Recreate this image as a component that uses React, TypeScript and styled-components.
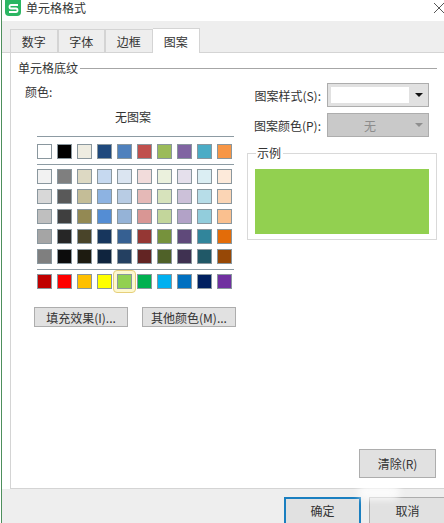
import styled, { createGlobalStyle } from 'styled-components'

const GlobalStyle = createGlobalStyle`
  html, body {
    margin: 0;
    padding: 0;
    background: #fff;
  }
  * {
    box-sizing: border-box;
  }
`

const tabs = ['数字', '字体', '边框', '图案']

const themeRow = ['#ffffff', '#000000', '#eeece1', '#1f497d', '#4f81bd', '#c0504d', '#9bbb59', '#8064a2', '#4bacc6', '#f79646']

const shadeRows = [
  ['#f2f2f2', '#7f7f7f', '#ddd9c3', '#c6d9f0', '#dbe5f1', '#f2dcdb', '#ebf1dd', '#e5e0ec', '#dbeef3', '#fdeada'],
  ['#d8d8d8', '#595959', '#c4bd97', '#8db3e2', '#b8cce4', '#e5b9b7', '#d7e3bc', '#ccc1d9', '#b7dde8', '#fbd5b5'],
  ['#bfbfbf', '#3f3f3f', '#938953', '#548dd4', '#95b3d7', '#d99694', '#c3d69b', '#b2a2c7', '#92cddc', '#fac08f'],
  ['#a5a5a5', '#262626', '#494429', '#17365d', '#366092', '#953734', '#76923c', '#5f497a', '#31859b', '#e36c09'],
  ['#7f7f7f', '#0c0c0c', '#1d1b10', '#0f243e', '#244061', '#632423', '#4f6128', '#3f3151', '#205867', '#974806'],
]

const standardRow = ['#c00000', '#ff0000', '#ffc000', '#ffff00', '#92d050', '#00b050', '#00b0f0', '#0070c0', '#002060', '#7030a0']

function App() {
  return (
    <Page>
      <GlobalStyle />
      <WindowEdge />
      <Dialog>
        <TitleBar>
          <AppIcon>
            <svg width="11" height="9" viewBox="0 0 11 9" fill="none" stroke="#fff" strokeWidth="1.8">
              <path d="M10 1H3C1 1 1 4.5 3 4.5H8C10 4.5 10 8 8 8H1" />
            </svg>
          </AppIcon>
          <TitleText>单元格格式</TitleText>
          <CloseIcon width="10" height="10" viewBox="0 0 10 10" stroke="#444" strokeWidth="0.9">
            <path d="M0 0L10 10M10 0L0 10" />
          </CloseIcon>
        </TitleBar>

        <TabStrip>
          {tabs.map((tab) => (
            <Tab key={tab} $active={tab === '图案'}>{tab}</Tab>
          ))}
        </TabStrip>

        <Panel>
          <SectionHeader>
            <span>单元格底纹</span>
            <SectionLine />
          </SectionHeader>

          <Columns>
            <LeftColumn>
              <ColorLabel>颜色:</ColorLabel>
              <Palette>
                <NoPattern>无图案</NoPattern>
                <Divider $top={11} />
                <SwatchRow $top={7}>
                  {themeRow.map((c) => <Swatch key={c} $color={c} />)}
                </SwatchRow>
                <Divider $top={5} />
                {shadeRows.map((row, i) => (
                  <SwatchRow key={i} $top={i === 0 ? 4 : 5}>
                    {row.map((c) => <Swatch key={c} $color={c} />)}
                  </SwatchRow>
                ))}
                <Divider $top={5} />
                <SwatchRow $top={4}>
                  {standardRow.map((c) => (
                    <SwatchCell key={c}>
                      <Swatch $color={c} />
                      {c === '#92d050' && <SwatchHighlight />}
                    </SwatchCell>
                  ))}
                </SwatchRow>
              </Palette>
              <PaletteButtons>
                <PaletteButton>填充效果(I)...</PaletteButton>
                <PaletteButton>其他颜色(M)...</PaletteButton>
              </PaletteButtons>
            </LeftColumn>

            <RightColumn>
              <FieldRow>
                <FieldLabel>图案样式(S):</FieldLabel>
                <Select>
                  <SelectValue />
                  <Arrow />
                </Select>
              </FieldRow>
              <FieldRow>
                <FieldLabel>图案颜色(P):</FieldLabel>
                <Select $disabled>
                  <SelectValue $disabled>无</SelectValue>
                  <Arrow $disabled />
                </Select>
              </FieldRow>
              <SampleGroup>
                <SampleLegend>示例</SampleLegend>
                <SampleFill />
              </SampleGroup>
              <ClearButton>清除(R)</ClearButton>
            </RightColumn>
          </Columns>
        </Panel>

        <Footer>
          <OkButton>确定</OkButton>
          <CancelButton>取消</CancelButton>
        </Footer>
      </Dialog>
      <Watermark />
    </Page>
  )
}

export default App

const Page = styled.div`
  position: relative;
  display: flex;
  width: 444px;
  height: 523px;
  overflow: hidden;
  background: #fff;
  color: #333;
  font-family: "Noto Sans CJK SC", "Noto Sans", sans-serif;
  font-size: 12px;
`

const WindowEdge = styled.div`
  flex: none;
  width: 2px;
  border-left: 1px solid #fff;
  background: #4d8f5c;
`

const Dialog = styled.div`
  flex: 1;
  display: flex;
  flex-direction: column;
  min-width: 0;
`

const TitleBar = styled.div`
  flex: none;
  display: flex;
  align-items: flex-start;
  height: 21px;
  padding-left: 3px;
  background: #fff;
`

const AppIcon = styled.div`
  flex: none;
  display: flex;
  align-items: center;
  justify-content: center;
  width: 16px;
  height: 16px;
  border-radius: 0 0 4px 4px;
  background: #2bb662;
`

const TitleText = styled.div`
  margin-left: 5px;
  font-size: 12px;
  line-height: 16px;
`

const CloseIcon = styled.svg`
  flex: none;
  margin: 3px 0 0 auto;
  fill: none;
`

const TabStrip = styled.div`
  flex: none;
  display: flex;
  align-items: flex-end;
  height: 32px;
  padding-left: 8px;
  background: #eeeeee;
  border-bottom: 1px solid #d4d4d4;
`

const Tab = styled.div<{ $active?: boolean }>`
  display: flex;
  align-items: center;
  justify-content: center;
  width: 47.5px;
  height: ${(p) => (p.$active ? '25px' : '23px')};
  margin-bottom: ${(p) => (p.$active ? '-1px' : '0')};
  border: 1px solid #d4d4d4;
  border-bottom: none;
  border-left: ${(p) => (p.$active ? 'none' : '1px solid #d4d4d4')};
  background: ${(p) => (p.$active ? '#fff' : '#eeeeee')};
  font-size: 12px;
  z-index: ${(p) => (p.$active ? 1 : 0)};
`

const Panel = styled.div`
  flex: none;
  display: flex;
  flex-direction: column;
  height: 436px;
  margin-left: 8px;
  border-left: 1px solid #d4d4d4;
  border-bottom: 1px solid #d4d4d4;
  padding: 7px 7px 0 7px;
  background: #fff;
`

const SectionHeader = styled.div`
  flex: none;
  display: flex;
  align-items: center;
  height: 16px;
  line-height: 16px;
  font-size: 12px;
`

const SectionLine = styled.div`
  flex: 1;
  height: 1px;
  margin-left: 2px;
  background: #a6a6a6;
`

const Columns = styled.div`
  flex: 1;
  display: flex;
  min-height: 0;
`

const LeftColumn = styled.div`
  flex: none;
  display: flex;
  flex-direction: column;
  width: 229px;
  padding-left: 7px;
`

const ColorLabel = styled.div`
  height: 16px;
  margin-top: 8px;
  line-height: 16px;
`

const Palette = styled.div`
  width: 197px;
  margin-left: 12px;
`

const NoPattern = styled.div`
  height: 16px;
  margin-top: 9px;
  padding-right: 5px;
  line-height: 16px;
  text-align: center;
`

const Divider = styled.div<{ $top: number }>`
  height: 1px;
  margin-top: ${(p) => p.$top}px;
  background: #8d9ba3;
`

const SwatchRow = styled.div<{ $top: number }>`
  display: flex;
  gap: 5px;
  margin-top: ${(p) => p.$top}px;
`

const SwatchCell = styled.div`
  position: relative;
  width: 15px;
  height: 15px;
`

const Swatch = styled.div<{ $color: string }>`
  position: relative;
  z-index: 1;
  width: 15px;
  height: 15px;
  border: 1px solid #8a979e;
  background: ${(p) => p.$color};
`

const SwatchHighlight = styled.div`
  position: absolute;
  inset: -4px;
  border: 1px solid #e6cf7a;
  border-radius: 4px;
  background: #fdf8cf;
`

const PaletteButtons = styled.div`
  display: flex;
  gap: 14px;
  margin: 18px 0 0 9px;
`

const PaletteButton = styled.div`
  display: flex;
  align-items: center;
  justify-content: center;
  width: 94px;
  height: 20px;
  border: 1px solid #adadad;
  background: #e1e1e1;
`

const RightColumn = styled.div`
  flex: 1;
  display: flex;
  flex-direction: column;
  padding-top: 7px;
  min-width: 0;
`

const FieldRow = styled.div`
  display: flex;
  align-items: center;
  justify-content: flex-end;
  height: 24px;
  margin-bottom: 6px;
  padding-right: 8px;
`

const FieldLabel = styled.div`
  margin-right: 6px;
  white-space: nowrap;
`

const Select = styled.div<{ $disabled?: boolean }>`
  display: flex;
  align-items: center;
  width: 102px;
  height: 24px;
  padding: 3px;
  border: 1px solid #adadad;
  background: ${(p) => (p.$disabled ? '#c9c9c9' : '#e1e1e1')};
`

const SelectValue = styled.div<{ $disabled?: boolean }>`
  display: flex;
  align-items: center;
  justify-content: center;
  width: 78px;
  height: 16px;
  background: ${(p) => (p.$disabled ? 'transparent' : '#fff')};
  color: #8c8c8c;
`

const Arrow = styled.div<{ $disabled?: boolean }>`
  width: 0;
  height: 0;
  margin-left: 6px;
  border-left: 4px solid transparent;
  border-right: 4px solid transparent;
  border-top: 4px solid ${(p) => (p.$disabled ? '#8f8f8f' : '#111')};
`

const SampleGroup = styled.div`
  position: relative;
  width: 190px;
  height: 87px;
  margin-top: 10px;
  padding: 15px 7px 0 7px;
  border: 1px solid #d9d9d9;
`

const SampleLegend = styled.div`
  position: absolute;
  top: -9px;
  left: 8px;
  padding: 0 2px 0 1px;
  background: #fff;
  line-height: 16px;
`

const SampleFill = styled.div`
  height: 65px;
  background: #92d050;
`

const ClearButton = styled.div`
  display: flex;
  align-items: center;
  justify-content: center;
  align-self: flex-end;
  width: 77px;
  height: 29px;
  margin: auto 1px 10px 0;
  border: 1px solid #adadad;
  background: #e1e1e1;
`

const Footer = styled.div`
  flex: 1;
  display: flex;
  gap: 8px;
  padding: 8px 0 0 282px;
  background: #eeeeee;
`

const OkButton = styled.div`
  display: flex;
  align-items: center;
  justify-content: center;
  flex: none;
  width: 77px;
  height: 30px;
  border: 2px solid #1a7fc0;
  background: #e1e1e1;
  padding-bottom: 3px;
`

const CancelButton = styled.div`
  display: flex;
  align-items: center;
  justify-content: center;
  flex: none;
  width: 77px;
  height: 30px;
  border: 1px solid #adadad;
  background: #e1e1e1;
  padding-bottom: 3px;
`

// the blurry white watermark that sits over the footer buttons
const Watermark = styled.div`
  position: absolute;
  left: 358px;
  top: 485px;
  width: 42px;
  height: 15px;
  border-radius: 8px;
  background: #fff;
  opacity: 0.75;
  filter: blur(3px);
`
